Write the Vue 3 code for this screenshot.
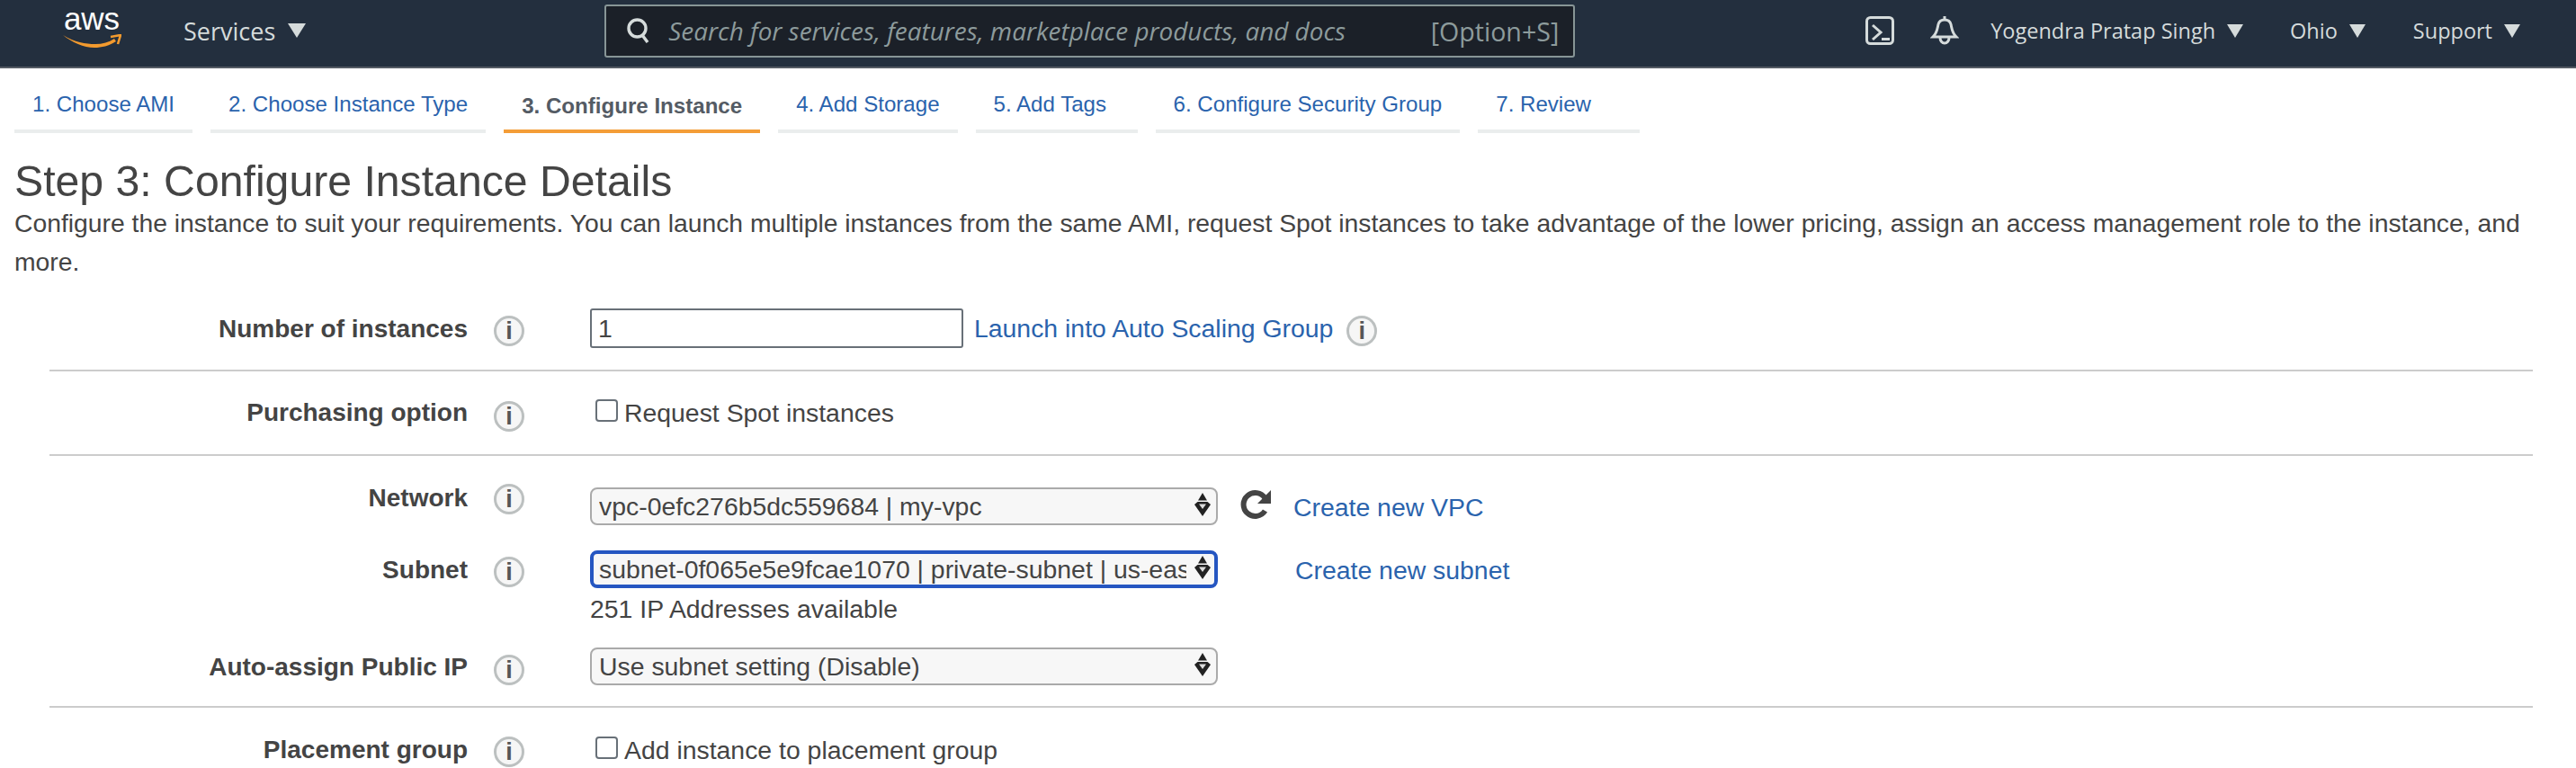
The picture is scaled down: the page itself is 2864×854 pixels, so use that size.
<template>
  <div class="page">
    <header class="topbar">
      <div class="logo">
        <span class="logo-word">aws</span>
        <svg viewBox="0 0 66 16" width="66" height="16">
          <path d="M1 1C14 9 26 11 37 11c8 0 15-2 21-6l2 3c-8 5-16 7-24 7C24 15 11 9 1 1z" fill="#f29a2e" />
          <path d="M54 3l11-2-3 10" fill="none" stroke="#f29a2e" stroke-width="2.6" stroke-linejoin="round" />
        </svg>
      </div>
      <span class="nav-item services">Services <i class="caret"></i></span>

      <div class="search">
        <svg viewBox="0 0 28 28" width="28" height="28" fill="none" stroke="#d5dbdb" stroke-width="3.4">
          <circle cx="12.5" cy="11.5" r="9.5" />
          <path d="M18 19l6 8" />
        </svg>
        <span class="search-hint">Search for services, features, marketplace products, and docs</span>
        <span class="search-key">[Option+S]</span>
      </div>

      <div class="topbar-right">
        <svg viewBox="0 0 32 32" width="32" height="32" fill="none" stroke="#d5dbdb" stroke-width="3">
          <rect x="1.5" y="1.5" width="29" height="29" rx="4" />
          <path d="M8 10l9 8-9 8M18 25.5h9" />
        </svg>
        <svg class="bell" viewBox="0 0 32 32" width="32" height="32" fill="none" stroke="#d5dbdb" stroke-width="3">
          <path d="M16 0v4M3 23c5-5 5-10 6-14 1-4 4-5 7-5s6 1 7 5c1 4 1 9 6 14zM11 24a5 6 0 0 0 10 0" />
        </svg>
        <span class="nav-item small user">Yogendra Pratap Singh <i class="caret"></i></span>
        <span class="nav-item small region">Ohio <i class="caret"></i></span>
        <span class="nav-item small">Support <i class="caret"></i></span>
      </div>
    </header>

    <nav class="tabs">
      <a v-for="tab in tabs" :key="tab" class="tab" :class="{ active: tab === activeTab }">{{ tab }}</a>
    </nav>

    <main class="content">
      <h1>Step 3: Configure Instance Details</h1>
      <p class="intro">Configure the instance to suit your requirements. You can launch multiple instances from the same AMI, request Spot instances to take advantage of the lower pricing, assign an access management role to the instance, and more.</p>

      <form class="form" @submit.prevent>
        <section class="group group-first">
          <div class="row">
            <label class="label lb-6">Number of instances</label>
            <span class="info in-8">i</span>
            <div class="control inline">
              <input class="text-input" value="1" />
              <a class="link asg">Launch into Auto Scaling Group</a>
              <span class="info small-gap">i</span>
            </div>
          </div>
        </section>

        <section class="group group-purchase">
          <div class="row">
            <label class="label">Purchasing option</label>
            <span class="info in-4">i</span>
            <label class="check-line"><input type="checkbox" class="check" />Request Spot instances</label>
          </div>
        </section>

        <section class="group group-network">
          <div class="row network">
            <label class="label">Network</label>
            <span class="info in-1">i</span>
            <div class="control inline sel-top">
              <div class="select-wrap">
                <select class="select"><option>vpc-0efc276b5dc559684 | my-vpc</option></select>
                <svg class="updown" viewBox="0 0 20 26" width="20" height="26">
                  <path d="M10 0l5 8.5H5z" fill="#222" />
                  <path d="M1 13l3.5-3h11l3.5 3-9 13z" fill="#222" />
                  <path d="M6 12.5h8L10 18z" fill="#ddd" />
                </svg>
              </div>
              <svg class="refresh" viewBox="0 0 34 34" width="34" height="34" fill="none">
                <path d="M27.5 24a13 13 0 1 1 0-14" stroke="#444" stroke-width="6" />
                <path d="M34 1v15H19z" fill="#444" />
              </svg>
              <a class="link new-vpc">Create new VPC</a>
            </div>
          </div>

          <div class="row subnet">
            <label class="label lb-5">Subnet</label>
            <span class="info in-7">i</span>
            <div class="control">
              <div class="inline">
                <div class="select-wrap">
                  <select class="select focused"><option>subnet-0f065e5e9fcae1070 | private-subnet | us-east-2a</option></select>
                  <svg class="updown" viewBox="0 0 20 26" width="20" height="26">
                    <path d="M10 0l5 8.5H5z" fill="#222" />
                    <path d="M1 13l3.5-3h11l3.5 3-9 13z" fill="#222" />
                    <path d="M6 12.5h8L10 18z" fill="#ddd" />
                  </svg>
                </div>
                <a class="link new-subnet">Create new subnet</a>
              </div>
              <div class="hint">251 IP Addresses available</div>
            </div>
          </div>

          <div class="row auto-ip">
            <label class="label lb-5">Auto-assign Public IP</label>
            <span class="info in-8">i</span>
            <div class="select-wrap">
              <select class="select"><option>Use subnet setting (Disable)</option></select>
              <svg class="updown" viewBox="0 0 20 26" width="20" height="26">
                <path d="M10 0l5 8.5H5z" fill="#222" />
                <path d="M1 13l3.5-3h11l3.5 3-9 13z" fill="#222" />
                <path d="M6 12.5h8L10 18z" fill="#ddd" />
              </svg>
            </div>
          </div>
        </section>

        <section class="group group-last">
          <div class="row">
            <label class="label">Placement group</label>
            <span class="info in-2">i</span>
            <label class="check-line"><input type="checkbox" class="check" />Add instance to placement group</label>
          </div>
        </section>
      </form>
    </main>
  </div>
</template>

<script setup>
const activeTab = '3. Configure Instance'

const tabs = [
  '1. Choose AMI',
  '2. Choose Instance Type',
  '3. Configure Instance',
  '4. Add Storage',
  '5. Add Tags',
  '6. Configure Security Group',
  '7. Review'
]
</script>

<style>
html, body {
  margin: 0;
  background: #fff;
  overflow: hidden;
}
</style>

<style scoped>
.page {
  width: 2864px;
  height: 854px;
  overflow: hidden;
  font-family: "Liberation Sans", Arial, sans-serif;
  color: #444;
}

.topbar {
  box-sizing: border-box;
  height: 76px;
  border-bottom: 2px solid #545b64;
  padding: 0 0 6px 69px;
  background: #232f3e;
  display: flex;
  align-items: center;
  font-family: "Open Sans", "Noto Sans", sans-serif;
  color: #d5dbdb;
}

.logo {
  width: 66px;
  margin-top: -6px;
  display: flex;
  flex-direction: column;
  align-items: center;
  flex-shrink: 0;
}

.logo-word {
  height: 26px;
  margin-bottom: 4px;
  font-family: "Liberation Sans", Arial, sans-serif;
  font-size: 35px;
  line-height: 26px;
  color: #fff;
}

.nav-item {
  font-size: 27px;
  display: inline-flex;
  align-items: center;
  gap: 14px;
  white-space: nowrap;
}

.nav-item.small {
  font-size: 23.5px;
  gap: 13px;
}

.services {
  margin-left: 69px;
}

.caret {
  width: 0;
  height: 0;
  border-left: 10px solid transparent;
  border-right: 10px solid transparent;
  border-top: 16px solid #d5dbdb;
}

.small .caret {
  border-left-width: 9px;
  border-right-width: 9px;
  border-top-width: 15px;
}

.search {
  margin-left: 332px;
  width: 1079px;
  height: 59px;
  box-sizing: border-box;
  border: 2px solid #879596;
  border-radius: 3px;
  background: #1b2028;
  display: flex;
  align-items: center;
  padding: 0 16px 0 22px;
  color: #8d9b9c;
  font-size: 27.9px;
}

.search-hint {
  margin-left: 19px;
  font-style: italic;
  flex: 1;
  white-space: nowrap;
}

.search-key {
  font-size: 28.6px;
}

.topbar-right {
  margin-left: auto;
  display: flex;
  align-items: center;
  padding-right: 62px;
}

.bell {
  margin-left: 40px;
}

.user {
  margin-left: 35px;
}

.region {
  margin-left: 52px;
  margin-right: 53px;
}

.tabs {
  display: flex;
  gap: 20px;
  padding: 22px 0 0 16px;
}

.tab {
  box-sizing: border-box;
  height: 50px;
  min-width: 180px;
  padding: 0 20px;
  border-bottom: 4px solid #eaeded;
  color: #2a63ad;
  font-size: 24.1px;
  line-height: 36px;
  white-space: nowrap;
}

.tab.active {
  border-bottom-color: #f49d37;
  color: #545b64;
  font-weight: 700;
  line-height: 40px;
}

.content {
  padding: 0 16px;
}

h1 {
  margin: 27px 0 0;
  font-size: 48.2px;
  line-height: 52px;
  font-weight: 400;
  color: #444;
}

.intro {
  margin: 0;
  font-size: 28.3px;
  line-height: 43px;
}

.form {
  margin: 0 32px 0 39px;
}

.group {
  box-sizing: border-box;
  border-bottom: 2px solid #ccc;
}

.group-first {
  height: 100px;
  padding-top: 30px;
}

.group-purchase {
  height: 94px;
  padding-top: 29px;
}

.group-network {
  height: 280px;
  padding-top: 30px;
}

.group-last {
  padding-top: 30px;
  border-bottom: 0;
}

.row {
  display: grid;
  grid-template-columns: 465px 136px 1fr;
  align-items: start;
  justify-items: start;
}

.subnet {
  margin-top: 26px;
}

.auto-ip {
  margin-top: 27px;
}

.label {
  justify-self: end;
  font-size: 28px;
  line-height: 34px;
  font-weight: 700;
  color: #444;
  white-space: nowrap;
}

.lb-5 { margin-top: 5px; }
.lb-6 { margin-top: 6px; }

.info {
  box-sizing: border-box;
  width: 34px;
  height: 34px;
  margin-left: 29px;
  border: 3px solid #bcc0c0;
  border-radius: 50%;
  background: #f6f6f6;
  display: flex;
  align-items: center;
  justify-content: center;
  color: #555;
  font-size: 27px;
  font-weight: 700;
  line-height: 1;
}

.in-1 { margin-top: 1px; }
.in-2 { margin-top: 2px; }
.in-4 { margin-top: 4px; }
.in-7 { margin-top: 7px; }
.in-8 { margin-top: 8px; }

.small-gap {
  margin-left: 15px;
  margin-top: 8px;
}

.control {
  min-width: 0;
}

.inline {
  display: flex;
  align-items: flex-start;
}

.sel-top {
  margin-top: 5px;
}

.text-input {
  box-sizing: border-box;
  width: 415px;
  height: 44px;
  border: 2px solid #687078;
  border-radius: 3px;
  padding: 0 7px;
  font: 28.4px "Liberation Sans", Arial, sans-serif;
  color: #444;
  background: #fff;
  outline: none;
}

.link {
  color: #2a63ad;
  font-size: 28.4px;
  line-height: 44px;
  white-space: nowrap;
}

.asg {
  margin-left: 12px;
}

.new-vpc {
  margin-left: 25px;
}

.new-subnet {
  margin-left: 86px;
}

.check-line {
  display: flex;
  align-items: center;
  height: 34px;
  font-size: 28.4px;
  white-space: nowrap;
}

.check {
  appearance: none;
  box-sizing: border-box;
  width: 25px;
  height: 25px;
  margin: -6px 7px 0 6px;
  border: 2px solid #687078;
  border-radius: 4px;
  background: #fff;
  flex-shrink: 0;
}

.select-wrap {
  position: relative;
  width: 698px;
  height: 42px;
  flex-shrink: 0;
}

.select {
  appearance: none;
  box-sizing: border-box;
  width: 100%;
  height: 100%;
  border: 2px solid #aaa;
  border-radius: 8px;
  padding: 0 33px 0 8px;
  background: #f7f7f7;
  color: #444;
  font: 28.4px "Liberation Sans", Arial, sans-serif;
  outline: none;
}

.select.focused {
  border: 4px solid #2556c1;
  padding-left: 6px;
  padding-right: 31px;
}

.updown {
  position: absolute;
  top: 6px;
  right: 7px;
}

.refresh {
  margin-left: 25px;
  margin-top: 2px;
  flex-shrink: 0;
}

.hint {
  margin-top: 5px;
  font-size: 28.4px;
  line-height: 32px;
  color: #444;
}
</style>
